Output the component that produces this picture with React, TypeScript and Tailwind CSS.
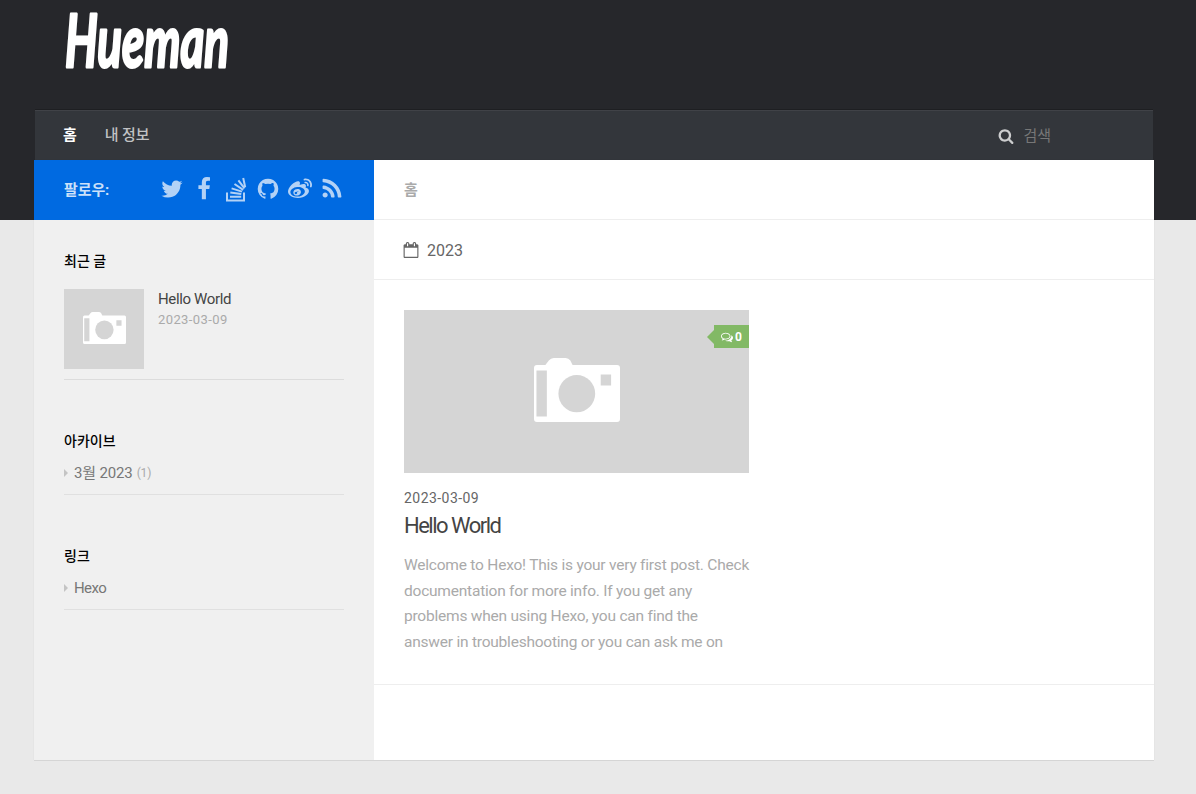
import type { ReactNode } from 'react';
import { FaWeibo } from 'react-icons/fa';

const paths = {
  twitter:
    'M1684 408q-67 98-162 167 1 14 1 42 0 130-38 259.5t-115.5 248.5-184.5 210.5-258 146-323 54.5q-271 0-496-145 35 4 78 4 225 0 401-138-105-2-188-64.5t-114-159.5q33 5 61 5 43 0 85-11-112-23-185.5-111.5t-73.5-205.5v-4q68 38 146 41-66-44-105-115t-39-154q0-88 44-163 121 149 294.5 238.5t371.5 99.5q-8-38-8-74 0-134 94.5-228.5t228.5-94.5q140 0 236 102 109-21 205-78-37 115-142 178 93-10 186-50z',
  facebook:
    'M1343 12v264h-157q-86 0-116 36t-30 108v189h293l-39 296h-254v759h-306v-759h-255v-296h255v-218q0-186 104-288.5t277-102.5q147 0 228 12z',
  github:
    'M896 128q209 0 385.5 103t279.5 279.5 103 385.5q0 251-146.5 451.5t-378.5 277.5q-27 5-40-7t-13-30q0-3 .5-76.5t.5-134.5q0-97-52-142 57-6 102.5-18t94-39 81-66.5 53-105 20.5-150.5q0-119-79-206 37-91-8-204-28-9-81 11t-92 44l-38 24q-93-26-192-26t-192 26q-16-11-42.5-27t-83.5-38.5-85-13.5q-45 113-8 204-79 87-79 206 0 85 20.5 150t52.5 105 80.5 67 94 39 102.5 18q-39 36-49 103-21 10-45 15t-57 5-65.5-21.5-55.5-62.5q-19-32-48.5-52t-49.5-24l-20-3q-21 0-29 4.5t-5 11.5 9 14 13 12l7 5q22 10 43.5 38t31.5 51l10 23q13 38 44 61.5t67 30 69.5 7 55.5-3.5l23-4q0 38 .5 88.5t.5 54.5q0 18-13 30t-40 7q-232-77-378.5-277.5t-146.5-451.5q0-209 103-385.5t279.5-279.5 385.5-103z',
  rss: 'M576 1344q0 80-56 136t-136 56-136-56-56-136 56-136 136-56 136 56 56 136zm512 123q2 28-17 48-18 21-47 21h-135q-25 0-43-16.5t-20-41.5q-22-229-184.5-391.5t-391.5-184.5q-25-2-41.5-20t-16.5-43v-135q0-29 21-47 17-17 43-17h5q160 13 306 80.5t259 181.5q114 113 181.5 259t80.5 306zm512 2q2 27-18 47-18 20-46 20h-143q-26 0-44.5-17.5t-19.5-42.5q-12-215-101-408.5t-231.5-336-336-231.5-408.5-102q-25-1-42.5-19.5t-17.5-43.5v-143q0-28 20-46 18-18 44-18h3q262 13 501.5 120t425.5 294q187 186 294 425.5t120 501.5z',
  search:
    'M1216 832q0-185-131.5-316.5t-316.5-131.5-316.5 131.5-131.5 316.5 131.5 316.5 316.5 131.5 316.5-131.5 131.5-316.5zm512 832q0 52-38 90t-90 38q-54 0-90-38l-343-342q-179 124-399 124-143 0-273.5-55.5t-225-150-150-225-55.5-273.5 55.5-273.5 150-225 225-150 273.5-55.5 273.5 55.5 225 150 150 225 55.5 273.5q0 220-124 399l343 343q37 37 37 90z',
  comments:
    'M704 384q-153 0-286 52t-211.5 141-78.5 191q0 82 53 158t149 132l97 56-35 84q34-20 62-39l44-31 53 10q78 14 153 14 153 0 286-52t211.5-141 78.5-191-78.5-191-211.5-141-286-52zm0-128q191 0 353.5 68.5t256.5 186.5 94 257-94 257-256.5 186.5-353.5 68.5q-86 0-176-16-124 88-278 128-36 9-86 16h-3q-11 0-20.5-8t-11.5-21q-1-3-1-6.5t.5-6.5 2-6l2.5-5 3.5-5.5 4-5 4.5-5 4-4.5q5-6 23-25t26-29.5 22.5-29 25-38.5 20.5-44q-124-72-195-177t-71-224q0-139 94-257t256.5-186.5 353.5-68.5zm822 1169q10 24 20.5 44t25 38.5 22.5 29 26 29.5 23 25q1 1 4 4.5t4.5 5 4 5 3.5 5.5l2.5 5 2 6 .5 6.5-1 6.5q-3 14-13 22t-22 7q-50-7-86-16-154-40-278-128-90 16-176 16-271 0-472-132 58 4 88 4 161 0 309-45t264-129q125-92 192-212t67-254q0-77-23-152 129 71 204 178t75 230q0 120-71 224.5t-195 176.5z',
  calendar:
    'M192 1664h1408v-1024h-1408v1024zm384-1216v-288q0-14-9-23t-23-9h-64q-14 0-23 9t-9 23v288q0 14 9 23t23 9h64q14 0 23-9t9-23zm768 0v-288q0-14-9-23t-23-9h-64q-14 0-23 9t-9 23v288q0 14 9 23t23 9h64q14 0 23-9t9-23zm384-64v1280q0 52-38 90t-90 38h-1408q-52 0-90-38t-38-90v-1280q0-52 38-90t90-38h128v-96q0-66 47-113t113-47h64q66 0 113 47t47 113v96h384v-96q0-66 47-113t113-47h64q66 0 113 47t47 113v96h128q52 0 90 38t38 90z',
};

function Icon({ name, className }: { name: keyof typeof paths; className: string }) {
  return (
    <svg viewBox="0 0 1792 1792" fill="currentColor" className={className}>
      <path d={paths[name]} />
    </svg>
  );
}

function StackIcon() {
  return (
    <svg viewBox="0 0 24 26" fill="none" stroke="currentColor" strokeWidth="2" className="h-[26px] w-6">
      <path d="M3 16.500V24.500h17v-8M6 20.800h11.200M6.300 16.400l11 1.500M7.600 12.400l10.400 3.200M10.500 8l8.700 5.800M14.400 4.300l6.100 8M19.200 2l2 9.300" />
    </svg>
  );
}

function Camera({ className }: { className: string }) {
  return (
    <svg viewBox="0 0 87 64" className={className} preserveAspectRatio="none">
      <path
        fill="#fff"
        d="M3 7h8.500l3.500-4.500Q17 0 20 0h12q3 0 4.800 2.500L39 7h45q3 0 3 3v51q0 3-3 3H3q-3 0-3-3V10q0-3 3-3z"
      />
      <path fill="#d5d5d5" d="M2.500 12.500h10.500v46H2.500zM67.500 16.500h10.500v11H67.500z" />
      <circle cx="43.300" cy="35.700" r="18.600" fill="#d5d5d5" />
    </svg>
  );
}

function Widget({ title, children }: { title: string; children: ReactNode }) {
  return (
    <section className="mx-[30px] pt-[30px]">
      <h3 className="h-[22px] text-[14px] leading-[22px] font-medium text-black">{title}</h3>
      {children}
    </section>
  );
}

function WidgetLink({ children }: { children: ReactNode }) {
  return (
    <div className="mt-[5px] flex h-[38px] items-start border-b border-[#e0e0e0] pt-1 text-[15px] leading-6 tracking-[-0.15px] text-[#777]">
      <svg viewBox="0 0 4 8" className="mt-2 mr-[6px] h-2 w-1 fill-[#c4c4c4]">
        <path d="M0 0l4 4-4 4z" />
      </svg>
      {children}
    </div>
  );
}

export default function App() {
  return (
    <div className="h-[794px] overflow-hidden bg-[linear-gradient(#26272b_220px,#e9e9e9_220px)] font-[Roboto,'Noto_Sans_CJK_KR',sans-serif]">
      <div className="ml-[34px] w-[1120px]">
        <header className="h-[109px] pl-[29px]">
          <svg viewBox="0 0 200 100" className="h-[100px] w-[200px] overflow-visible" role="img">
            <text
              x="2"
              y="66.500"
              textLength="164"
              lengthAdjust="spacingAndGlyphs"
              fill="#fff"
              stroke="#fff"
              strokeWidth="3"
              strokeLinejoin="round"
              className="font-[Lato] text-[72px] font-bold italic"
            >
              Hueman
            </text>
          </svg>
        </header>
        <nav className="mx-px flex h-[51px] items-start border-t border-[#1e1f22] bg-[#33363b] text-[15px] font-medium tracking-[-0.1px] text-[#c1c2c4] shadow-[inset_0_1px_0_#404247]">
          <a className="mt-[13px] ml-[28px] leading-6 font-bold text-white">홈</a>
          <a className="mt-[13px] ml-[28px] leading-6">내 정보</a>
          <div className="mt-[14px] mr-[102px] ml-auto flex items-center">
            <Icon name="search" className="mr-[10px] h-4 w-4 text-[#cccdce]" />
            <span className="leading-6 font-normal text-[#777]">검색</span>
          </div>
        </nav>
        <main className="flex h-[600px] shadow-[0_1px_0_#d5d5d5,0_0_1px_rgba(0,0,0,0.1)]">
          <aside className="w-[340px] bg-[#f0f0f0]">
            <div className="flex h-[60px] items-center bg-[#006ae1] pl-[30px] text-[#b3d2f6]">
              <span className="w-24 text-[15px] font-bold tracking-[-0.1px] text-[#cce1f9]">팔로우:</span>
              <div className="flex items-center gap-2 pb-0.5">
                <Icon name="twitter" className="h-6 w-6" />
                <Icon name="facebook" className="h-6 w-6" />
                <StackIcon />
                <Icon name="github" className="h-6 w-6" />
                <FaWeibo className="h-6 w-6" />
                <Icon name="rss" className="h-6 w-6" />
              </div>
            </div>
            <Widget title="최근 글">
              <div className="mt-[17px] flex h-[91px] border-b border-[#dcdcdc]">
                <div className="flex h-20 w-20 items-center justify-center bg-[#d5d5d5] pb-0.5 pl-px">
                  <Camera className="h-8 w-[43px]" />
                </div>
                <div className="ml-[14px]">
                  <p className="text-[15px] leading-5 tracking-[-0.36px] text-[#444]">Hello World</p>
                  <p className="text-[13px] leading-[22px] tracking-[0.4px] text-[#aaa]">2023-03-09</p>
                </div>
              </div>
            </Widget>
            <div className="h-5" />
            <Widget title="아카이브">
              <WidgetLink>
                <span>3월 2023</span>
                <span className="ml-[4px] text-[12px] text-[#aaa]">(1)</span>
              </WidgetLink>
            </Widget>
            <div className="h-5" />
            <Widget title="링크">
              <WidgetLink>
                <span className="tracking-[-0.6px]">Hexo</span>
              </WidgetLink>
            </Widget>
          </aside>
          <section className="flex-1 bg-white">
            <div className="h-[60px] border-b border-[#eee] px-[30px] text-[15px] leading-[61px] font-bold text-[#aaa]">홈</div>
            <div className="flex h-[60px] items-center border-b border-[#eee] px-[30px] pt-px text-[16px] text-[#666]">
              <Icon name="calendar" className="-ml-px mr-2 h-4 w-4" />
              <span className="pt-0.5 leading-6">2023</span>
            </div>
            <article className="h-[405px] border-b border-[#eee] px-[30px] pt-[30px]">
              <div className="relative flex h-[163px] w-[345px] items-center justify-center bg-[#d5d5d5] pb-[3px] pl-px">
                <Camera className="h-16 w-[86px]" />
                <span className="absolute top-[15px] right-0 flex h-[23px] w-[35px] items-center bg-[#82b965] pl-[7px] text-[12px] font-bold text-white">
                  <svg viewBox="0 0 7 14" className="absolute top-[5px] -left-[7px] h-[14px] w-[7px] fill-[#82b965]">
                    <path d="M7 0v14L0 7z" />
                  </svg>
                  <Icon name="comments" className="mr-[2px] h-3 w-3" />
                  <span>0</span>
                </span>
              </div>
              <p className="mt-[15px] text-[14px] leading-5 tracking-[0.45px] text-[#666]">2023-03-09</p>
              <h2 className="mt-1 text-[22px] leading-7 tracking-[-1.500px] text-[#444]">Hello World</h2>
              <p className="mt-[13px] text-[15.500px] leading-[25.600px] tracking-[-0.22px] whitespace-nowrap text-[#aaa]">
                Welcome to Hexo! This is your very first post. Check
                <br />
                documentation for more info. If you get any
                <br />
                problems when using Hexo, you can find the
                <br />
                answer in troubleshooting or you can ask me on
              </p>
            </article>
          </section>
        </main>
      </div>
    </div>
  );
}
